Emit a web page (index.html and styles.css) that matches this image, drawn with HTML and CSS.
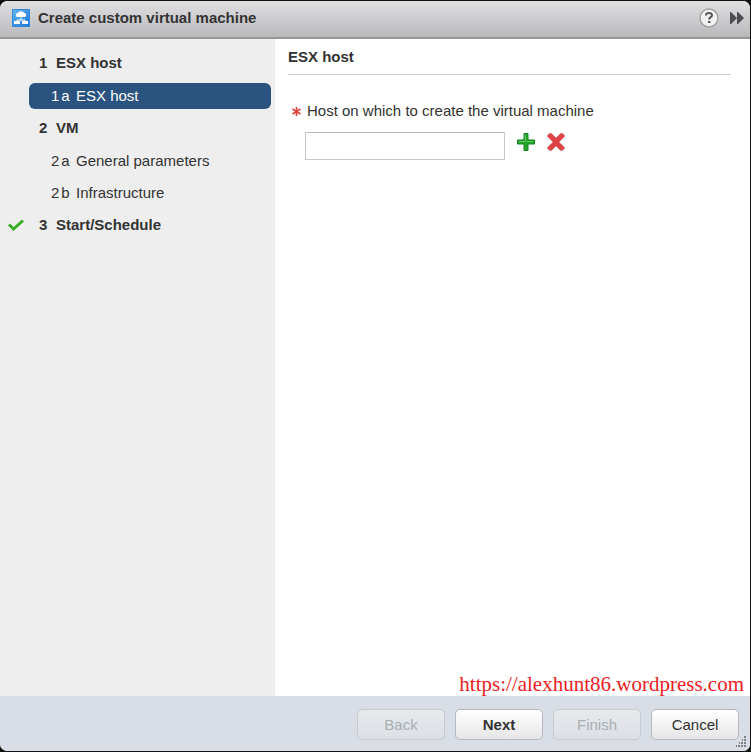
FILE: index.html
```html
<!DOCTYPE html>
<html lang="en">
<head>
<meta charset="utf-8">
<title>Create custom virtual machine</title>
<link rel="stylesheet" href="styles.css">
</head>
<body>
<main class="dialog">
  <header class="titlebar">
    <svg class="app-icon" viewBox="0 0 18 18" aria-hidden="true">
      <defs><linearGradient id="blue" x1="0" y1="0" x2="1" y2="1"><stop offset="0" stop-color="#66b8f8"/><stop offset="1" stop-color="#1974cf"/></linearGradient></defs>
      <rect x=".5" y=".5" width="17" height="17" fill="url(#blue)" stroke="#2f8ade"/>
      <path d="M6 8a2 2 0 0 1-.3-4 3.500 2.800 0 0 1 6.600 0 2 2 0 0 1-.3 4z" fill="#fff"/>
      <path d="M9 8v3M5 13v-2h8v2" fill="none" stroke="#fff"/>
      <path d="M2 12h6v3H2zM10 12h6v3h-6z" fill="#fff"/>
    </svg>
    <h1>Create custom virtual machine</h1>
    <button class="icon-button help" aria-label="Help">
      <svg width="20" height="20" viewBox="0 0 20 20"><circle cx="10" cy="10" r="9" fill="#f1f1f1" stroke="#a3a3a6" stroke-width="1.500"/><path d="M7 7.500V6.800Q7.300 5 10 5t3 2.200c0 2-2.800 1.900-2.800 4.300" fill="none" stroke="#555" stroke-width="2"/><path d="M9 13h2.400v2H9z" fill="#555"/></svg>
    </button>
    <button class="icon-button" aria-label="Minimize to work in progress">
      <svg width="14" height="14" viewBox="0 0 14 14"><path d="M0 1h1l6 6-6 6H0zM7 1h1l6 6-6 6H7z" fill="#4d4d4f"/></svg>
    </button>
  </header>
  <div class="body">
    <nav class="steps" aria-label="Steps">
      <a class="step" href="#host"><span class="num">1</span>ESX host</a>
      <a class="step sub current" href="#host" aria-current="step"><span class="num"><span>1</span><span>a</span></span>ESX host</a>
      <a class="step" href="#vm"><span class="num">2</span>VM</a>
      <a class="step sub" href="#general"><span class="num"><span>2</span><span>a</span></span>General parameters</a>
      <a class="step sub" href="#infrastructure"><span class="num"><span>2</span><span>b</span></span>Infrastructure</a>
      <a class="step" href="#schedule"><svg class="check" width="16" height="12" viewBox="0 0 16 12" aria-hidden="true"><path d="M1 5.500l4.500 4.500L15 1.500" fill="none" stroke="#3aad27" stroke-width="3"/></svg><span class="num">3</span>Start/Schedule</a>
    </nav>
    <section class="page" id="host">
      <h2>ESX host</h2>
      <label class="field-label" for="host-input"><svg width="9" height="10" viewBox="0 0 9 10" aria-hidden="true"><path d="M4.500 1v9M.5 3l8 5M.5 8l8-5" stroke="#e0403c" stroke-width="1.600"/></svg>Host on which to create the virtual machine</label>
      <div class="field">
        <input id="host-input" type="text">
        <button class="icon-button" aria-label="Add host">
          <svg width="18" height="20" viewBox="0 0 18 20"><path d="M7 1.500h4V8h6.500v4H11v6.500H7V12H.5V8H7z" fill="#25a52c" stroke="#138320"/><path d="M8.500 3v6.500H2M10 9.500h6" fill="none" stroke="#62cb5c"/></svg>
        </button>
        <button class="icon-button" aria-label="Remove host">
          <svg width="18" height="20" viewBox="0 0 18 20"><path d="M.5 3.500l2-2h2L9 6l4.500-4.500h2l2 2v1L12 10l5.500 5.500v1l-2 2h-2L9 14l-4.500 4.500h-2l-2-2v-1L6 10 .5 4.500z" fill="#df4648" stroke="#d98082"/><path d="M3.500 4.500l11 11M14.500 4.500l-11 11" stroke="#dc4144" stroke-width="3"/></svg>
        </button>
      </div>
      <p class="watermark">https://alexhunt86.wordpress.com</p>
    </section>
  </div>
  <footer class="actions">
    <button class="action" disabled>Back</button>
    <button class="action primary">Next</button>
    <button class="action" disabled>Finish</button>
    <button class="action">Cancel</button>
    <svg class="grip" width="12" height="12" viewBox="0 0 12 12" aria-hidden="true"><path d="M10 1h2M8 4h1M10 4h2M5 7h1M7 7h2M10 7h2M2 10h1M4 10h2M7 10h2M10 10h2" stroke="#7b8086" stroke-width="2"/></svg>
  </footer>
</main>
</body>
</html>
```
FILE: styles.css
```css
* { box-sizing: border-box; }
body {
  margin: 0;
  background: #111;
  color: #333;
  font: 15px/20px "Liberation Sans", Arial, sans-serif;
}
h1, h2, p { margin: 0; }
button, input { font: inherit; color: inherit; }
.dialog {
  min-height: 100vh;
  display: flex;
  flex-direction: column;
  border: solid #111;
  border-width: 1px 1px 1px 0;
  border-radius: 8px;
  overflow: hidden;
  background: #fff;
}
.titlebar {
  display: flex;
  align-items: center;
  height: 38px;
  padding: 0 6px 3px 12px;
  background: linear-gradient(#e0e0e3, #b9b9bc);
  border-bottom: 2px solid #97979a;
}
.app-icon { width: 18px; height: 18px; }
h1 { flex: 1; margin-left: 8px; font-size: 15px; }
.icon-button {
  display: flex;
  padding: 0;
  border: 0;
  background: none;
}
.help { margin-right: 11px; }
.body { flex: 1; display: flex; }
.steps {
  flex: 0 0 275px;
  padding: 11px 4px 0 0;
  background: #eee;
}
.step {
  position: relative;
  display: flex;
  align-items: center;
  height: 26px;
  margin: 0 0 7px 29px;
  padding-left: 10px;
  color: #333;
  font-weight: bold;
  text-decoration: none;
}
.num { display: flex; gap: 2px; width: 17px; }
.sub { padding-left: 22px; margin-bottom: 6px; font-weight: normal; }
.sub .num { width: 25px; }
.current {
  color: #fff;
  background: #2a537f;
  border-radius: 6px;
}
.check { position: absolute; left: -21px; top: 7px; }
.page {
  flex: 1;
  display: flex;
  flex-direction: column;
  padding: 8px 6px 0 13px;
}
h2 {
  margin-right: 13px;
  padding-bottom: 7px;
  border-bottom: 1px solid #ccc;
  font-size: 15px;
}
.field-label {
  display: flex;
  align-items: center;
  gap: 6px;
  margin: 26px 0 0 4px;
}
.field {
  display: flex;
  align-items: flex-start;
  gap: 12px;
  margin: 11px 0 0 17px;
}
.field input {
  width: 200px;
  height: 28px;
  padding: 4px 6px;
  border: 1px solid #c8c8c8;
  border-top-color: #bbb;
  background: #fff;
}
.watermark {
  margin-top: auto;
  color: #ed1c24;
  font: 21px/24px "Liberation Serif", serif;
  text-align: right;
}
.actions {
  position: relative;
  display: flex;
  justify-content: flex-end;
  gap: 10px;
  padding: 13px 11px 11px;
  background: #d9dde5;
}
.action {
  width: 88px;
  height: 31px;
  padding: 0;
  border: 1px solid #b5b8bc;
  border-radius: 5px;
  background: linear-gradient(#fff, #e6e6e6);
}
.action:disabled {
  color: #a7afb3;
  border-color: #c6cbd0;
  background: linear-gradient(#e6eaed, #dce0e5);
}
.primary { font-weight: bold; }
.grip { position: absolute; right: 4px; bottom: 3px; }
```
